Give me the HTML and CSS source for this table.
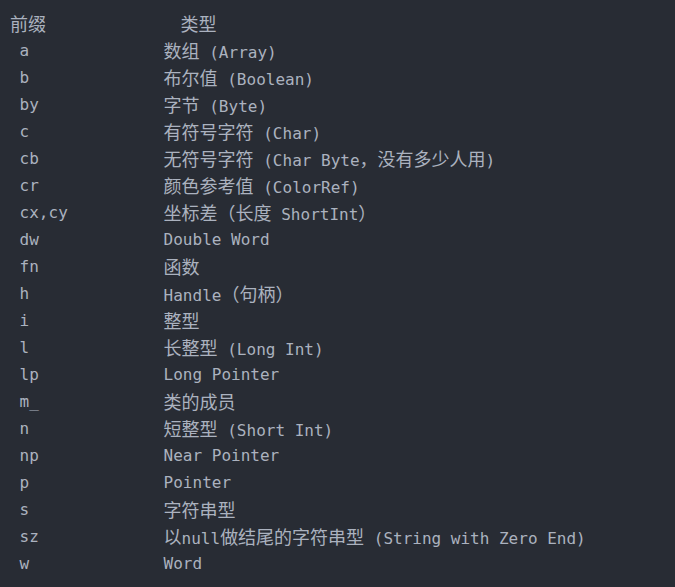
FILE: index.html
```html
<!DOCTYPE html>
<html lang="zh-CN">
<head>
<meta charset="utf-8">
<title>前缀</title>
<link rel="stylesheet" href="styles.css">
</head>
<body>
<div class="code">
  <div class="row head"><span class="k"><span class="zh">前缀</span></span><span class="v"><span class="zh">类型</span></span></div>
  <div class="row"><span class="k">a</span><span class="v"><span class="zh">数组</span> (Array)</span></div>
  <div class="row"><span class="k">b</span><span class="v"><span class="zh">布尔值</span> (Boolean)</span></div>
  <div class="row"><span class="k">by</span><span class="v"><span class="zh">字节</span> (Byte)</span></div>
  <div class="row"><span class="k">c</span><span class="v"><span class="zh">有符号字符</span> (Char)</span></div>
  <div class="row"><span class="k">cb</span><span class="v"><span class="zh">无符号字符</span> (Char Byte<span class="zh">，没有多少人用</span>)</span></div>
  <div class="row"><span class="k">cr</span><span class="v"><span class="zh">颜色参考值</span> (ColorRef)</span></div>
  <div class="row"><span class="k">cx,cy</span><span class="v"><span class="zh">坐标差（长度</span> ShortInt<span class="zh">）</span></span></div>
  <div class="row"><span class="k">dw</span><span class="v">Double Word</span></div>
  <div class="row"><span class="k">fn</span><span class="v"><span class="zh">函数</span></span></div>
  <div class="row"><span class="k">h</span><span class="v">Handle<span class="zh">（句柄）</span></span></div>
  <div class="row"><span class="k">i</span><span class="v"><span class="zh">整型</span></span></div>
  <div class="row"><span class="k">l</span><span class="v"><span class="zh">长整型</span> (Long Int)</span></div>
  <div class="row"><span class="k">lp</span><span class="v">Long Pointer</span></div>
  <div class="row"><span class="k">m_</span><span class="v"><span class="zh">类的成员</span></span></div>
  <div class="row"><span class="k">n</span><span class="v"><span class="zh">短整型</span> (Short Int)</span></div>
  <div class="row"><span class="k">np</span><span class="v">Near Pointer</span></div>
  <div class="row"><span class="k">p</span><span class="v">Pointer</span></div>
  <div class="row"><span class="k">s</span><span class="v"><span class="zh">字符串型</span></span></div>
  <div class="row"><span class="k">sz</span><span class="v"><span class="zh">以</span>null<span class="zh">做结尾的字符串型</span> (String with Zero End)</span></div>
  <div class="row"><span class="k">w</span><span class="v">Word</span></div>
</div>
</body>
</html>
```
FILE: styles.css
```css
html, body {
  margin: 0;
  padding: 0;
  background: #282c34;
  height: 100%;
}
.code {
  box-sizing: border-box;
  width: 675px;
  height: 587px;
  padding: 10px 0 0 10px;
  background: #282c34;
  color: #abb2bf;
  font-family: "DejaVu Sans Mono", "Liberation Mono", "Noto Sans CJK SC", monospace;
  font-size: 16px;
  display: flex;
  flex-direction: column;
}
.row {
  display: grid;
  grid-template-columns: 153.6px 1fr;
  line-height: 27px;
  height: 27px;
  white-space: pre;
}
.k {
  padding-left: 9.6px;
}
.head .k {
  padding-left: 0;
}
.head .v {
  padding-left: 16.8px;
}
.zh {
  font-family: "Noto Sans CJK SC", sans-serif;
  font-size: 18px;
  line-height: 27px;
}
```
